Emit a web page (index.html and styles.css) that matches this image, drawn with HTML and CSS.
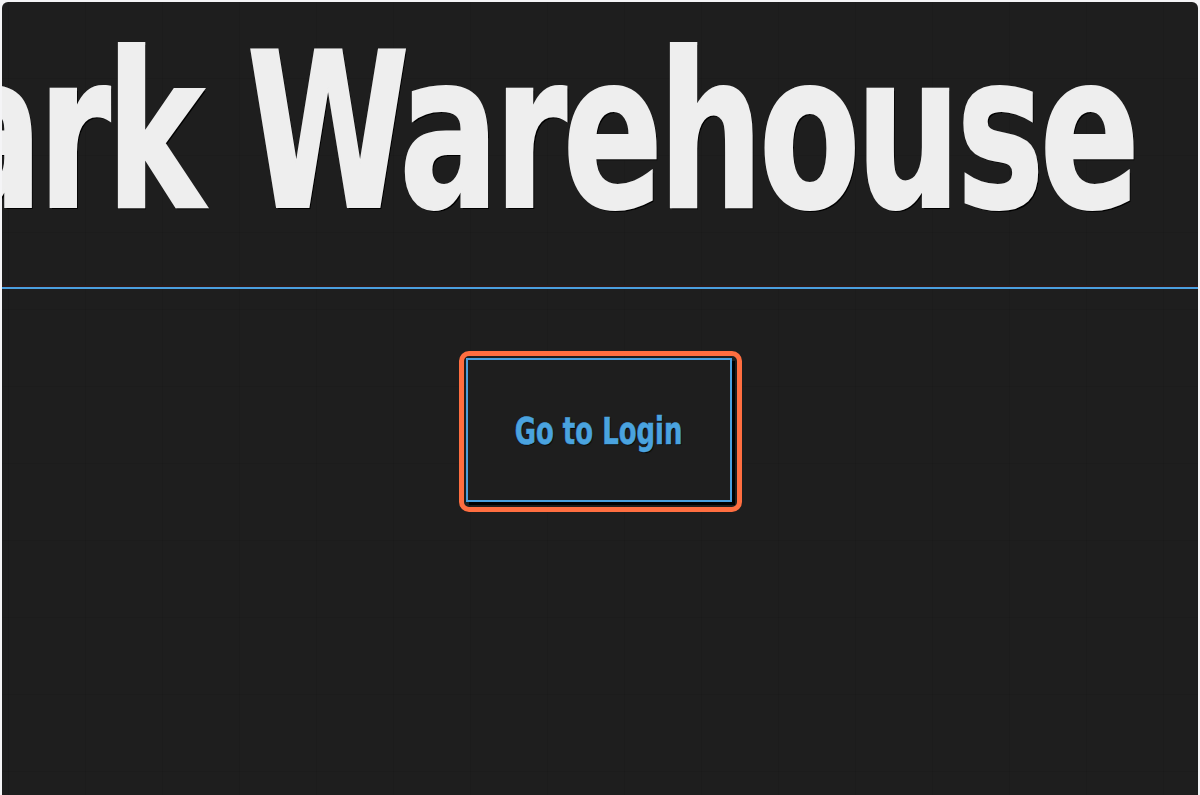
FILE: index.html
```html
<!DOCTYPE html>
<html lang="en">
<head>
<meta charset="utf-8">
<title>Dark Warehouse</title>
<link rel="stylesheet" href="styles.css">
</head>
<body>
<main class="panel">
  <header class="hero">
    <h1 class="title"><span class="title-text">Dark Warehouse</span></h1>
  </header>
  <section class="actions">
    <div class="ring">
      <button class="login-btn" type="button"><span class="login-label">Go to Login</span></button>
    </div>
  </section>
</main>
</body>
</html>
```

FILE: styles.css
```css
html, body {
  margin: 0;
  height: 100%;
}
body {
  background: #f4f4f6;
  padding: 2px 2px 0 2px;
  box-sizing: border-box;
  overflow: hidden;
  font-family: "DejaVu Sans Condensed", "DejaVu Sans", "Liberation Sans", sans-serif;
}
.panel {
  background-color: #1e1e1e;
  background-image:
    linear-gradient(90deg, rgba(0,0,0,0.06) 1px, transparent 1px),
    linear-gradient(0deg, rgba(0,0,0,0.06) 1px, transparent 1px);
  background-size: 77px 77px;
  background-position: 6px 0;
  border-radius: 6px 6px 0 0;
  min-height: 820px;
  overflow: hidden;
}
.hero {
  padding: 0 60px 0 0;
  height: 287px;
  box-sizing: border-box;
  border-bottom: 2px solid #4a9fde;
  box-shadow: inset 0 -2px 0 #2a1a1a;
}
.title {
  margin: 0;
  padding-top: 23px;
  font-size: 216px;
  line-height: 1;
  font-weight: 700;
  color: #eeeeee;
  white-space: nowrap;
  display: flex;
  justify-content: flex-end;
  text-shadow: 2px 2px 0 #000;
}
.title-text {
  display: inline-block;
  flex: none;
  letter-spacing: -6px;
  -webkit-text-stroke: 2px #eeeeee;
  transform: scaleX(0.76);
  transform-origin: right center;
  padding-right: 4px;
}
.actions {
  display: flex;
  justify-content: center;
  padding-top: 62px;
}
.ring {
  border: 5px solid #ff6e40;
  border-radius: 10px;
  padding: 2px 5px 5px 2px;
  display: flex;
}
.login-btn {
  width: 266px;
  height: 144px;
  background: #1e1e1e;
  border: 2px solid #4a9fde;
  box-shadow: 3px 3px 0 #000;
  color: #4aa3df;
  font-family: inherit;
  font-weight: 700;
  font-size: 37px;
  text-shadow: 1px 1px 1px #000;
  cursor: pointer;
  padding: 3px 0 0 0;
}
.login-label {
  display: inline-block;
  transform: scaleX(0.78);
  white-space: nowrap;
  -webkit-text-stroke: 0.6px #4aa3df;
}
```
